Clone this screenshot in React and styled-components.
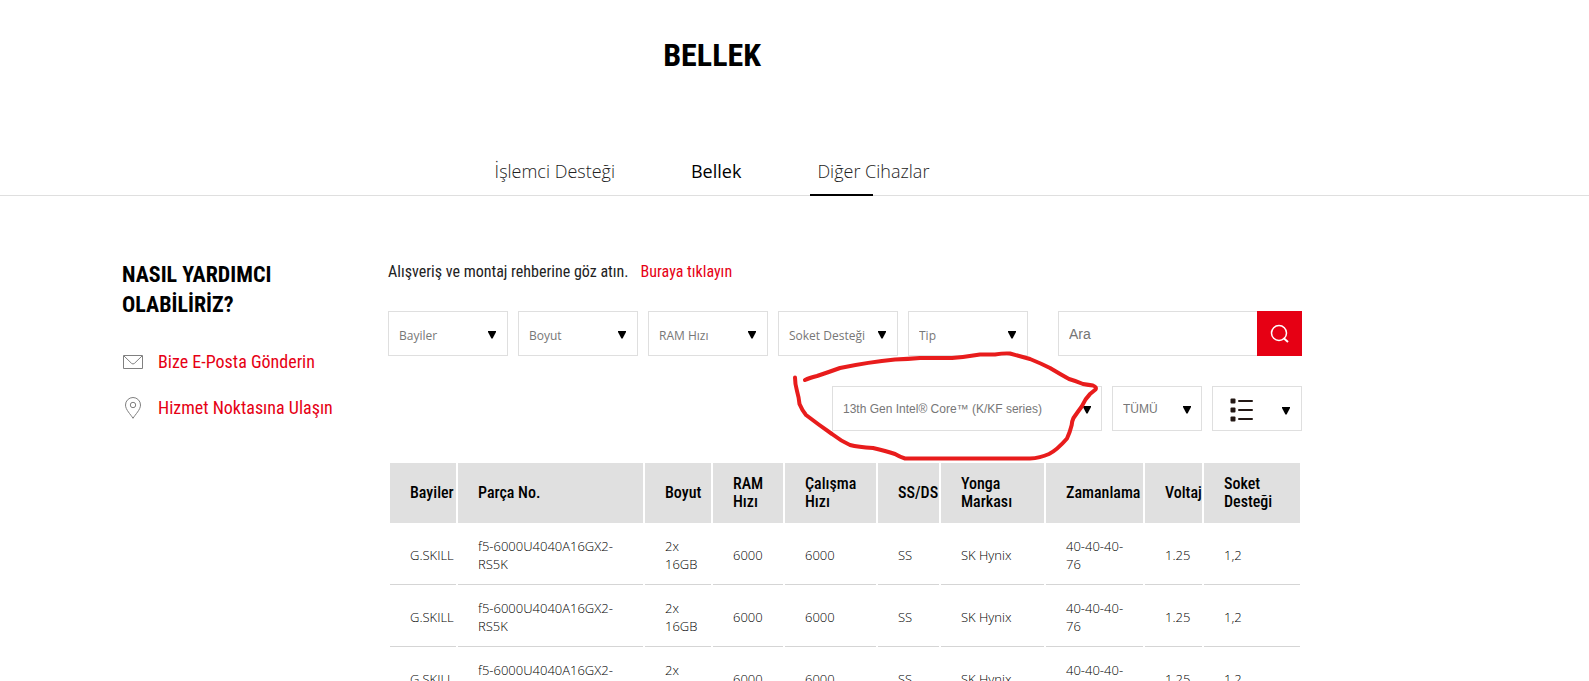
import React, { useState } from "react";
import styled, { createGlobalStyle } from "styled-components";

const condensed = `"Roboto Condensed", "Liberation Sans Narrow", Roboto, sans-serif`;
const body = `"Segoe UI", "Open Sans", "Noto Sans", sans-serif`;
const arial = `Arial, "Liberation Sans", sans-serif`;

const red = "#e60014";
const border = "#dfdfdf";

const filters = ["Bayiler", "Boyut", "RAM Hızı", "Soket Desteği", "Tip"];

const columns = [
  { label: "Bayiler", width: 66 },
  { label: "Parça No.", width: 185 },
  { label: "Boyut", width: 66 },
  { label: "RAM Hızı", width: 70 },
  { label: "Çalışma Hızı", width: 91 },
  { label: "SS/DS", width: 61, nowrap: true },
  { label: "Yonga Markası", width: 103 },
  { label: "Zamanlama", width: 97 },
  { label: "Voltaj", width: 57 },
  { label: "Soket Desteği", width: 96 },
];

const module = [
  "G.SKILL",
  "f5-6000U4040A16GX2-RS5K",
  "2x 16GB",
  "6000",
  "6000",
  "SS",
  "SK Hynix",
  "40-40-40-76",
  "1.25",
  "1,2",
];
const rows = [module, module, module];

const Arrow = () => (
  <ArrowIcon width="8" height="8" viewBox="0 0 8 8" aria-hidden="true">
    <path d="M0 0h8v1L4.6 7.6H3.4L0 1z" fill="#000" />
  </ArrowIcon>
);

const Dropdown = ({ label, options, plain, children }) => (
  <Field>
    <Select aria-label={label} $plain={plain}>
      {options.map((option) => (
        <option key={option}>{option}</option>
      ))}
    </Select>
    <Arrow />
    {children}
  </Field>
);

const MailIcon = () => (
  <svg width="22" height="24" viewBox="0 0 22 24" fill="none" stroke="#808080">
    <path d="M1.5 5.5h19v13h-19z" />
    <path d="M2 6l7.6 7.4q1.4 1.2 2.8 0L20 6" />
  </svg>
);

const PinIcon = () => (
  <svg width="22" height="24" viewBox="0 0 22 24" fill="none" stroke="#808080">
    <path d="M11 22.3C8.8 18.5 3.5 13.8 3.5 9a7.5 7.5 0 0 1 15 0c0 4.8-5.3 9.5-7.5 13.3z" />
    <circle cx="11" cy="9" r="2.7" />
  </svg>
);

const SearchIcon = () => (
  <svg width="20" height="20" viewBox="0 0 20 20" fill="none" stroke="#fff">
    <circle cx="9" cy="9" r="7.5" strokeWidth="1.5" />
    <path d="M13.5 14l4.5 4" strokeWidth="2" />
  </svg>
);

const ListIcon = () => (
  <svg width="24" height="24" viewBox="0 0 24 24" aria-hidden="true">
    <g fill="#231815">
      <rect x="0.5" y="0.5" width="5" height="5" rx="1" />
      <rect x="0.5" y="9.5" width="5" height="5" rx="1" />
      <rect x="0.5" y="18.5" width="5" height="5" rx="1" />
      <rect x="8" y="2" width="15" height="2" rx="1" />
      <rect x="8" y="11" width="15" height="2" rx="1" />
      <rect x="8" y="20" width="15" height="2" rx="1" />
    </g>
  </svg>
);

export default function App() {
  const [search, setSearch] = useState("");

  return (
    <>
      <GlobalStyle />
      <Header>
        <Title>BELLEK</Title>
        <Tabs>
          <Tab href="#cpu">İşlemci Desteği</Tab>
          <Tab href="#memory" $active>
            Bellek
          </Tab>
          <Tab href="#devices" $marked>
            Diğer Cihazlar
          </Tab>
        </Tabs>
      </Header>
      <Main>
        <Aside>
          <AsideTitle>NASIL YARDIMCI OLABİLİRİZ?</AsideTitle>
          <HelpLink href="#mail">
            <MailIcon />
            Bize E-Posta Gönderin
          </HelpLink>
          <HelpLink href="#service">
            <PinIcon />
            Hizmet Noktasına Ulaşın
          </HelpLink>
        </Aside>
        <Content>
          <Intro>
            <span>Alışveriş ve montaj rehberine göz atın.</span>
            <RedLink href="#guide">Buraya tıklayın</RedLink>
          </Intro>
          <Toolbar>
            <Filters>
              {filters.map((filter) => (
                <Dropdown key={filter} label={filter} options={[filter]} />
              ))}
            </Filters>
            <Search onSubmit={(e) => e.preventDefault()}>
              <SearchInput
                name="search"
                aria-label="Ara"
                placeholder="Ara"
                value={search}
                onChange={(e) => setSearch(e.target.value)}
              />
              <SearchButton type="submit" aria-label="Ara">
                <SearchIcon />
              </SearchButton>
            </Search>
          </Toolbar>
          <ViewBar>
            <Dropdown
              plain
              label="İşlemci"
              options={["13th Gen Intel® Core™ (K/KF series)"]}
            >
              <Scribble viewBox="0 0 310 115" aria-hidden="true">
                <path d="M5 29.5Q5 36 7 43Q9 50 9.5 56Q12 62 16 67Q29 77 42 86Q51 93 60 97Q68 99 83 100Q96 103 105 106Q110 109 115 110.5H240Q250 110 259 106Q267 102 277 90.5Q280 84 281.7 77Q282 73 283.5 70Q287 65 291.7 58.500Q295 51 300 46L305.5 41.5Q307 39 303 37.5Q299 37 293 36Q286 33 279 31Q270 26 260 20Q250 15 240 11Q229 8 220 5.500Q214 5 205 6.500H190Q175 9 162 10H130Q118 11 105 11.500Q79 14 50 20Q39 24 27 28Q19 30 15 32" />
              </Scribble>
            </Dropdown>
            <Dropdown plain label="Göster" options={["TÜMÜ"]} />
            <ViewButton type="button" aria-label="Görünüm" aria-haspopup="true">
              <ListIcon />
              <Arrow />
            </ViewButton>
          </ViewBar>
          <Table>
            <colgroup>
              {columns.map((column) => (
                <Col key={column.label} $width={column.width} />
              ))}
            </colgroup>
            <thead>
              <tr>
                {columns.map((column) => (
                  <Th key={column.label} $nowrap={column.nowrap}>
                    {column.label}
                  </Th>
                ))}
              </tr>
            </thead>
            <tbody>
              {rows.map((row, i) => (
                <tr key={i}>
                  {row.map((cell, j) => (
                    <Td key={j}>{cell}</Td>
                  ))}
                </tr>
              ))}
            </tbody>
          </Table>
        </Content>
      </Main>
    </>
  );
}

const GlobalStyle = createGlobalStyle`
  *, *::before, *::after {
    box-sizing: border-box;
  }
  body {
    margin: 0;
    background: #fff;
    color: #222;
    font-family: ${body};
  }
`;

const Header = styled.header`
  display: flex;
  flex-direction: column;
  align-items: center;
  padding: 35px 165px 0 0;
  border-bottom: 1px solid ${border};
`;

const Title = styled.h1`
  margin: 0;
  color: #000;
  font: 700 32px/40px ${condensed};
`;

const Tabs = styled.nav`
  display: flex;
  gap: 76px;
  margin-top: 73px;
`;

const Tab = styled.a`
  position: relative;
  padding: 7px 0 8px;
  color: ${({ $active }) => ($active ? "#000" : "#222")};
  font-size: 18px;
  font-weight: ${({ $active }) => ($active ? 400 : 300)};
  line-height: 32px;
  text-decoration: none;

  &::after {
    content: "";
    display: ${({ $marked }) => ($marked ? "block" : "none")};
    position: absolute;
    bottom: -1px;
    left: -7px;
    width: 63px;
    height: 2px;
    background: #000;
  }
`;

const Main = styled.main`
  display: flex;
  max-width: 1345px;
  margin: 0 auto;
  padding: 60px 165px 0 0;
`;

const Aside = styled.aside`
  flex: 0 0 266px;
`;

const AsideTitle = styled.h2`
  width: 200px;
  margin: 4px 0 30px;
  color: #000;
  font: 700 22px/30px ${condensed};
`;

const HelpLink = styled.a`
  display: flex;
  align-items: center;
  gap: 14px;
  margin-bottom: 22px;
  color: ${red};
  font: 400 18px/24px ${condensed};
  text-decoration: none;
`;

const Content = styled.section`
  flex: 1;
  min-width: 0;
`;

const Intro = styled.p`
  display: flex;
  gap: 12px;
  margin: 4px 0 27px;
  font: 400 16px/24px ${condensed};
`;

const RedLink = styled.a`
  color: ${red};
  text-decoration: none;
`;

const Toolbar = styled.div`
  display: flex;
  gap: 30px;
`;

const Filters = styled.div`
  display: grid;
  grid-template-columns: repeat(5, 120px);
  gap: 10px;
`;

const Field = styled.div`
  position: relative;
`;

const Select = styled.select`
  appearance: none;
  display: block;
  width: 100%;
  height: 45px;
  padding: ${({ $plain }) => ($plain ? 0 : 4)}px 20px 0 10px;
  border: 1px solid ${border};
  border-radius: 0;
  background: #fff;
  color: #777;
  font-family: ${({ $plain }) => ($plain ? arial : body)};
  font-size: 12px;
`;

const ArrowIcon = styled.svg`
  position: absolute;
  top: 20px;
  right: 12px;
  pointer-events: none;
`;

const Search = styled.form`
  display: flex;
  flex: 1;
  min-width: 0;
`;

const SearchInput = styled.input`
  flex: 1;
  min-width: 0;
  height: 45px;
  padding: 0 10px;
  border: 1px solid ${border};
  border-right: 0;
  border-radius: 0;
  font: 400 14px ${arial};

  &::placeholder {
    color: #757575;
  }
`;

const SearchButton = styled.button`
  display: flex;
  align-items: center;
  justify-content: center;
  width: 45px;
  height: 45px;
  padding: 0;
  border: 0;
  background: ${red};
`;

const ViewBar = styled.div`
  display: grid;
  grid-template-columns: 270px 90px 90px;
  justify-content: end;
  gap: 10px;
  margin: 30px 0;

  ${ArrowIcon} {
    right: 11px;
  }
`;

const ViewButton = styled.button`
  position: relative;
  display: flex;
  align-items: center;
  height: 45px;
  padding: 2px 17px 0;
  border: 1px solid ${border};
  background: #fff;
`;

const Scribble = styled.svg`
  position: absolute;
  z-index: 1;
  top: -38px;
  left: -42px;
  width: 310px;
  height: 115px;
  fill: none;
  stroke: #e81c1c;
  stroke-width: 4;
  stroke-linecap: round;
  stroke-linejoin: round;
  pointer-events: none;
`;

const Table = styled.table`
  width: 100%;
  table-layout: fixed;
  border-spacing: 2px;
  line-height: 18px;
  text-align: left;
`;

const Col = styled.col`
  width: ${({ $width }) => $width}px;
`;

const Th = styled.th`
  height: 60px;
  padding: 0 10px 0 20px;
  background: #e0e0e0;
  color: #000;
  font-family: ${condensed};
  font-size: 16px;
  font-weight: 500;
  white-space: ${({ $nowrap }) => ($nowrap ? "nowrap" : "normal")};
`;

const Td = styled.td`
  height: 60px;
  padding: 0 10px 0 20px;
  border-bottom: 1px solid #d5d5d5;
  color: #000;
  font-size: 13px;
  font-weight: 300;
`;
